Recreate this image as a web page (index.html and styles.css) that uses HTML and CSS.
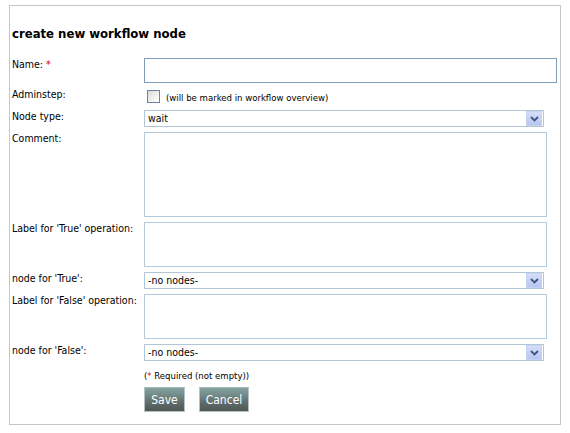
FILE: index.html
```html
<!DOCTYPE html>
<html>
<head>
<meta charset="utf-8">
<link rel="stylesheet" href="styles.css">
</head>
<body>
<div class="panel">
  <h1 class="title">create new workflow node</h1>
  <div class="form">
    <div class="label">Name: <span class="req">*</span></div>
    <div class="field"><input class="text-input" type="text"></div>

    <div class="label">Adminstep:</div>
    <div class="field check-row"><span class="checkbox"></span><span class="hint">(will be marked in workflow overview)</span></div>

    <div class="label">Node type:</div>
    <div class="field"><div class="select"><span class="select-value">wait</span><span class="select-btn"><svg width="9" height="6" viewBox="0 0 9 6"><path d="M1 1 L4.5 4.5 L8 1" fill="none" stroke="#3d5585" stroke-width="1.8"/></svg></span></div></div>

    <div class="label">Comment:</div>
    <div class="field"><textarea class="area area-comment"></textarea></div>

    <div class="label">Label for 'True' operation:</div>
    <div class="field"><textarea class="area area-small"></textarea></div>

    <div class="label">node for 'True':</div>
    <div class="field"><div class="select"><span class="select-value">-no nodes-</span><span class="select-btn"><svg width="9" height="6" viewBox="0 0 9 6"><path d="M1 1 L4.5 4.5 L8 1" fill="none" stroke="#3d5585" stroke-width="1.8"/></svg></span></div></div>

    <div class="label">Label for 'False' operation:</div>
    <div class="field"><textarea class="area area-small"></textarea></div>

    <div class="label">node for 'False':</div>
    <div class="field"><div class="select"><span class="select-value">-no nodes-</span><span class="select-btn"><svg width="9" height="6" viewBox="0 0 9 6"><path d="M1 1 L4.5 4.5 L8 1" fill="none" stroke="#3d5585" stroke-width="1.8"/></svg></span></div></div>

    <div class="label"></div>
    <div class="required-note">(<span class="req">*</span> Required (not empty))</div>

    <div class="label"></div>
    <div class="field buttons"><button class="btn btn-save">Save</button><button class="btn btn-cancel">Cancel</button></div>
  </div>
</div>
</body>
</html>
```
FILE: styles.css
```css
html, body {
  margin: 0;
  padding: 0;
  background: #ffffff;
}
body {
  font-family: "DejaVu Sans Condensed", "DejaVu Sans", sans-serif;
  font-size: 10.5px;
  color: #000;
}
.panel {
  margin: 5px 0 0 9px;
  width: 548px;
  height: 418px;
  border: 1px solid #c6c6c6;
  padding: 0 0 0 2px;
  box-sizing: content-box;
}
.title {
  margin: 20px 0 0 0;
  font-size: 13px;
  font-weight: bold;
  line-height: 16px;
  height: 16px;
}
.form {
  margin-top: 16px;
  display: grid;
  grid-template-columns: 132px 1fr;
  row-gap: 5px;
}
.label {
  line-height: 13px;
}
.req {
  color: #d40000;
}
.field {
  display: flex;
  align-items: flex-start;
}
.text-input {
  width: 413px;
  height: 25px;
  box-sizing: border-box;
  border: 1px solid #7f9db9;
  margin: 0;
  padding: 0 3px;
  outline: none;
}
.check-row {
  height: 17px;
  align-items: center;
}
.checkbox {
  width: 13px;
  height: 13px;
  box-sizing: border-box;
  border: 1px solid #6d83a3;
  background: linear-gradient(135deg, #dcdcd7 0%, #f2f2ee 60%, #ffffff 100%);
  margin: 0 6px 0 3px;
}
.hint {
  font-size: 9.5px;
  line-height: 12px;
  padding-top: 3px;
}
.select {
  width: 400px;
  height: 17px;
  box-sizing: border-box;
  border: 1px solid #b3c5d9;
  background: #fff;
  display: flex;
  justify-content: space-between;
  align-items: stretch;
  padding: 0 1px 0 3px;
}
.select-value {
  line-height: 15px;
}
.select-btn {
  width: 16px;
  box-sizing: border-box;
  border: 1px solid #c6d2f0;
  background: linear-gradient(#d5defa, #b8c6ef);
  display: flex;
  align-items: center;
  justify-content: center;
}
.area {
  width: 403px;
  box-sizing: border-box;
  border: 1px solid #b3c9dc;
  margin: 0;
  padding: 2px;
  resize: none;
  outline: none;
  font-family: inherit;
}
.area-comment {
  height: 85px;
}
.area-small {
  height: 45px;
}
.required-note {
  font-size: 9.5px;
  line-height: 16px;
  height: 16px;
  padding-top: 2px;
  box-sizing: border-box;
}
.buttons {
  gap: 14px;
}
.btn {
  height: 25px;
  box-sizing: border-box;
  border: 1px solid #b7c3c3;
  border-top-color: #a6bdbb;
  background: linear-gradient(#84a3a0 0%, #6f8785 35%, #5b6766 70%, #4f5756 100%);
  color: #ffffff;
  font-family: "DejaVu Sans Condensed", "DejaVu Sans", sans-serif;
  font-size: 12px;
  padding: 0;
  margin: 0;
}
.btn-save {
  width: 41px;
}
.btn-cancel {
  width: 50px;
}
```
